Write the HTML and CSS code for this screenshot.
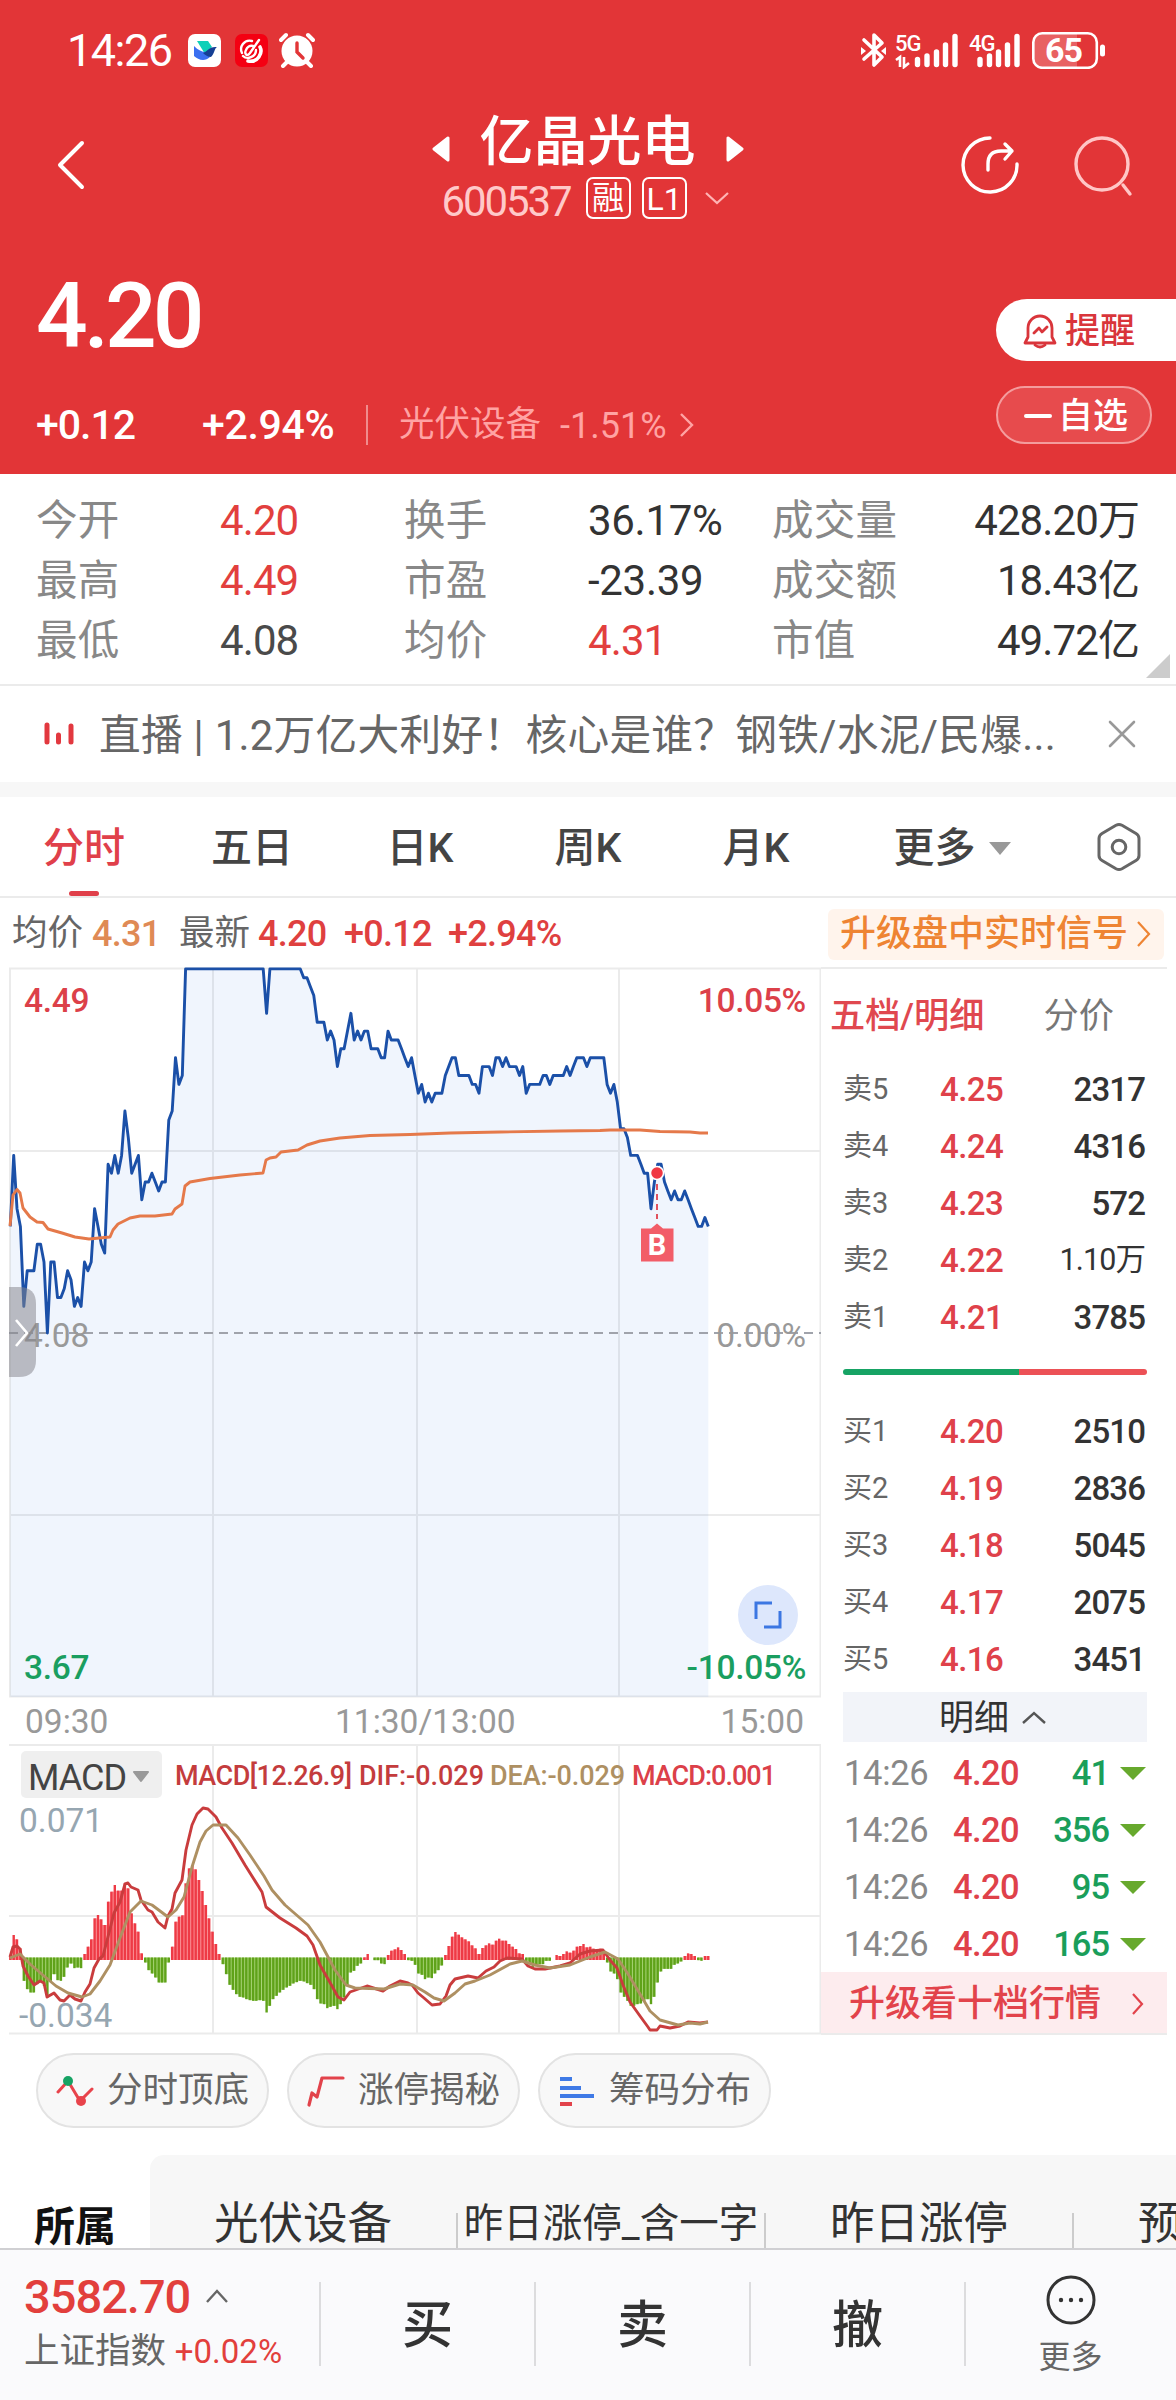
FILE: index.html
```html
<!DOCTYPE html>
<html lang="zh-CN">
<head>
    <meta charset="UTF-8">
    <meta name="viewport" content="width=device-width, initial-scale=1.0">
    <title>亿晶光电 600537</title>
    <link rel="stylesheet" href="styles.css">
</head>
<body>
    <header class="header">
        <div class="status-bar">
            <span class="clock">14:26</span>
            <svg class="app-icon" width="33" height="33" viewBox="0 0 33 33">
                <rect width="33" height="33" rx="7" fill="#fff"/>
                <path d="M9 7h11l4 6-7 7z" fill="#0fd0b8"/>
                <path d="M6 12c4 4 8 6 12 6l4 5c-5 5-12 3-16-1z" fill="#3a6ff0"/>
                <path d="M15 19c4-1 6-7 14-6-3 2-2 6-6 10-3 0-6-2-8-4z" fill="#153f94"/>
            </svg>
            <svg class="app-icon" width="33" height="33" viewBox="0 0 33 33">
                <rect width="33" height="33" rx="7" fill="#f40012"/>
                <g fill="none" stroke="#fff" stroke-width="2.4" stroke-linecap="round">
                    <path d="M17 7C9 5 4 13 7 19"/>
                    <path d="M24 6L15 19c-3 4-6 1-4-3 1-3 4-5 7-4"/>
                    <path d="M8 22c4 4 13 1 13-6"/>
                    <path d="M13 27c10 2 15-8 12-14" stroke-width="3.6"/>
                </g>
            </svg>
            <svg width="36" height="36" viewBox="0 0 36 36">
                <circle cx="18" cy="19" r="15.5" fill="#fff"/>
                <path d="M2 8l5-5M34 8l-5-5" stroke="#fff" stroke-width="4" stroke-linecap="round"/>
                <path d="M8 30l-4 4M28 30l4 4" stroke="#fff" stroke-width="4" stroke-linecap="round"/>
                <path d="M18 11v9l6 6" fill="none" stroke="#e23537" stroke-width="3.4" stroke-linecap="round"/>
            </svg>
            <span class="grow"></span>
            <svg width="245" height="38" viewBox="860 30 245 38" class="signals">
                <path d="M864 39l18 17-8 8V34l8 8-18 16" fill="none" stroke="#fff" stroke-width="3.6" stroke-linejoin="round" stroke-linecap="round"/>
                <path d="M861 46l5 4-5 4zM886 46l-5 4 5 4z" fill="#fff"/>
                <text x="895" y="49.500" class="net">5G</text>
                <text x="969" y="49.500" class="net">4G</text>
                <path d="M896 59l4-3v10M904 56v10l5-4" fill="none" stroke="#fff" stroke-width="2.6"/>
                <g stroke="#fff" stroke-width="5.4" stroke-linecap="round">
                    <path d="M917.500 58.500V63.500M927 55V63.500M936.500 51V63.500M945.500 44V63.500M955 35.500V63.500"/>
                    <path d="M980 58.500V63.500M989.500 55V63.500M998.500 51V63.500M1007.500 44V63.500M1017 35.500V63.500"/>
                </g>
                <path d="M1043 33h34v33h-34q-9 0-9-9v-15q0-9 9-9z" fill="#fff" opacity=".22"/>
                <rect x="1033.300" y="32.300" width="63.500" height="34.500" rx="9" fill="none" stroke="#fff" stroke-width="2.600"/>
                <rect x="1100" y="43.500" width="5" height="12" rx="2.500" fill="#fff"/>
                <text x="1063.500" y="61" class="battery" text-anchor="middle">65</text>
            </svg>
        </div>

        <div class="nav">
            <svg class="back" width="30" height="50" viewBox="0 0 30 50">
                <path d="M26 3L4 25l22 22" fill="none" stroke="#fff" stroke-width="4" stroke-linecap="round" stroke-linejoin="round"/>
            </svg>
            <div class="stock">
                <div class="stock-name">
                    <svg width="18" height="26" viewBox="0 0 18 26"><path d="M16 2v22L2 13z" fill="#fff" stroke="#fff" stroke-width="3" stroke-linejoin="round"/></svg>
                    <h1>亿晶光电</h1>
                    <svg width="18" height="26" viewBox="0 0 18 26"><path d="M2 2v22l14-11z" fill="#fff" stroke="#fff" stroke-width="3" stroke-linejoin="round"/></svg>
                </div>
                <div class="stock-code">
                    <span class="code">600537</span>
                    <span class="box">融</span>
                    <span class="box level">L1</span>
                    <svg width="26" height="14" viewBox="0 0 26 14"><path d="M2 2l11 10L24 2" fill="none" stroke="#ffb4b4" stroke-width="2.200"/></svg>
                </div>
            </div>
            <div class="nav-icons">
                <svg width="60" height="60" viewBox="0 0 60 60" fill="none" stroke="#fff" stroke-width="3.400" stroke-linecap="round" stroke-linejoin="round">
                    <path d="M31 3A27 27 0 1 0 58 29"/>
                    <path d="M29 35v-6q0-13 13-13h11M46 9l7 7-7 8"/>
                </svg>
                <svg width="60" height="62" viewBox="0 0 60 62" fill="none" stroke="#ffc6c6" stroke-width="3.400" stroke-linecap="round">
                    <circle cx="28" cy="29" r="26"/>
                    <path d="M49 50l7 9"/>
                </svg>
            </div>
        </div>

        <div class="quote">
            <div class="quote-left">
                <div class="price">4.20</div>
                <div class="change">
                    <span class="diff">+0.12</span>
                    <span class="percent">+2.94%</span>
                    <span class="sector">光伏设备</span>
                    <span class="sector-percent">-1.51%</span>
                    <svg width="16" height="26" viewBox="0 0 16 26"><path d="M2 2l11 11L2 24" fill="none" stroke="#ffa3a3" stroke-width="2.400"/></svg>
                </div>
            </div>
            <div class="quote-right">
                <button class="remind">
                    <svg width="34" height="36" viewBox="0 0 34 36" fill="none" stroke="#d9353b" stroke-width="2.800" stroke-linejoin="round" stroke-linecap="round">
                        <path d="M5 24V15a12 12 0 0 1 24 0v9l3 6H2z"/>
                        <path d="M11 20l5-5 3 4 5-5M12 32q5 4 10 0"/>
                    </svg>
                    提醒
                </button>
                <button class="favor"><i></i>自选</button>
            </div>
        </div>
    </header>

    <section class="stats">
        <span class="label">今开</span><span class="up">4.20</span>
        <span class="label">换手</span><span>36.17%</span>
        <span class="label">成交量</span><span class="right">428.20万</span>
        <span class="label">最高</span><span class="up">4.49</span>
        <span class="label">市盈</span><span>-23.39</span>
        <span class="label">成交额</span><span class="right">18.43亿</span>
        <span class="label">最低</span><span class="low">4.08</span>
        <span class="label">均价</span><span class="up">4.31</span>
        <span class="label">市值</span><span class="right">49.72亿</span>
        <i class="corner"></i>
    </section>

    <section class="news">
        <svg width="30" height="26" viewBox="0 0 30 26" stroke="#e2383f" stroke-width="5" stroke-linecap="round"><path d="M3 4v17M14.500 14v7M27 5v16"/></svg>
        <p>直播 | 1.2万亿大利好！核心是谁？钢铁/水泥/民爆...</p>
        <svg width="28" height="28" viewBox="0 0 28 28"><path d="M2 2l24 24M26 2L2 26" stroke="#999" stroke-width="2.600" stroke-linecap="round"/></svg>
    </section>

    <nav class="tabs">
        <a class="active">分时</a>
        <a>五日</a>
        <a>日K</a>
        <a>周K</a>
        <a>月K</a>
        <a>更多<i class="caret"></i></a>
        <a class="setting">
            <svg width="44" height="50" viewBox="0 0 44 50" fill="none" stroke="#666" stroke-width="3" stroke-linejoin="round">
                <path d="M19 3.300q3-1.600 6 0l14 8.200q3 1.800 3 5v17q0 3.200-3 5l-14 8.200q-3 1.600-6 0l-14-8.200q-3-1.800-3-5v-17q0-3.200 3-5z"/>
                <circle cx="22" cy="25" r="6.800"/>
            </svg>
        </a>
    </nav>

    <div class="info-row">
        <span class="name">均价</span><span class="num avg">4.31</span>
        <span class="name latest">最新</span><span class="num">4.20</span>
        <span class="num diff2">+0.12</span><span class="num pct2">+2.94%</span>
        <a class="signal-btn">升级盘中实时信号
            <svg width="15" height="28" viewBox="0 0 15 28"><path d="M2 2l11 12L2 26" fill="none" stroke="#ee8433" stroke-width="2.200"/></svg>
        </a>
    </div>

    <main class="board">
        <svg class="chart" width="821" height="1070" viewBox="0 967 821 1070">
            <g class="grid">
                <path d="M9 968.500H821M9 1151H821M9 1515H821M9 1696.500H821"/>
                <path d="M10 968V1697M213 968V1697M417 968V1697M619 968V1697M820.500 968V1697"/>
                <path d="M9 1745H821M9 1916H821M9 2033.500H821"/>
                <path d="M213 1745V2034M417 1745V2034M619 1745V2034M820.500 1745V2034"/>
            </g>
            <path id="area" class="area"/>
            <path class="zero" d="M9 1333H822"/>
            <path id="line" class="line"/>
            <polyline class="avg-line" points="10,1226 13,1195 17,1189.500 20,1193 23,1208 30,1217 37,1222 43,1222.500 48,1229 62,1233 75,1237 89,1239 110,1237 113,1230 118,1224 130,1218 140,1216 155,1216 172,1214 175,1209 182,1204 185,1186 190,1182 210,1178.500 240,1175 263,1173 266,1160 270,1158 276,1157 281,1152 298,1150 307,1145 320,1141 340,1138 370,1135.500 410,1134.500 450,1133 500,1132 560,1131 600,1130.500 610,1130 640,1130 660,1131.500 690,1132 700,1133 708,1133"/>

            <text class="axis red" x="24" y="1012">4.49</text>
            <text class="axis red end" x="806" y="1012">10.05%</text>
            <text class="axis gray" x="24" y="1347">4.08</text>
            <text class="axis gray end" x="806" y="1347">0.00%</text>
            <text class="axis green" x="24" y="1679">3.67</text>
            <text class="axis green end" x="806" y="1679">-10.05%</text>
            <text class="axis gray" x="25" y="1733">09:30</text>
            <text class="axis gray" x="335" y="1733">11:30/13:00</text>
            <text class="axis gray end" x="804" y="1733">15:00</text>

            <!-- buy marker -->
            <path d="M657 1184V1219" stroke="#e0525e" stroke-width="2" stroke-dasharray="6 4"/>
            <circle cx="657" cy="1173" r="6.500" fill="#f03742" stroke="#fff" stroke-width="1.500"/>
            <path d="M641 1228.500h10l6-5 6 5h10.500v33H641z" fill="#f25d68"/>
            <text class="buy" x="657" y="1255" text-anchor="middle">B</text>

            <!-- drawer handle -->
            <path d="M9 1287h10q17 0 17 17v56q0 17-17 17H9z" fill="#84858c" opacity=".52"/>
            <path d="M16 1320l11 13-11 13" fill="none" stroke="#fff" stroke-width="2.600"/>

            <circle cx="768" cy="1615" r="30" fill="#dde7fc"/>
            <path d="M756 1619v-16h16M764 1627h16v-16" fill="none" stroke="#3c77e2" stroke-width="3"/>

            <g id="bars"></g>
            <polyline class="dif" points="10,1957 13,1947 17,1946 20,1949 23,1966 28,1976 34,1985 40,1981 44,1983 47,1997 54,1993 60,2000 64,2001 70,1995 75,1999 81,2001 85,1992 90,1984 94,1968 99,1959 103,1956 110,1929 114,1913 120,1902 125,1884 128,1883 131,1887 138,1890 141,1900 148,1910 152,1912 158,1922 165,1928 168,1916 172,1909 175,1893 182,1880 186,1850 192,1825 197,1814 203,1808 208,1809 216,1817 222,1828 232,1843 245,1865 262,1892 266,1907 280,1918 296,1928 307,1936 313,1945 320,1965 332,1986 338,1997 344,2000 350,1992 367,1986 383,1991 390,1986 400,1981 408,1983 412,1985 418,1993 424,1998 432,2005 440,2004 446,1996 450,1985 455,1979 468,1976 478,1978 486,1971 494,1967 500,1961 507,1958 522,1959 528,1966 535,1969 545,1969 560,1966 570,1963 580,1954 590,1951 603,1950 610,1960 617,1968 623,1985 630,2002 640,2016 648,2027 650,2030 657,2030 660,2026 670,2028 680,2026 688,2022 700,2023 708,2022"/>
            <polyline class="dea" points="10,1958 20,1954 30,1964 44,1976 56,1986 68,1993 82,1997 90,1994 100,1981 110,1965 120,1938 130,1912 141,1901 152,1905 168,1917 176,1910 184,1897 192,1867 200,1842 206,1831 213,1825 226,1825 238,1838 250,1855 264,1876 272,1890 285,1905 308,1925 320,1942 335,1970 346,1985 355,1988 384,1989 400,1984 413,1985 425,1992 434,1998 444,2001 455,1993 465,1984 475,1981 490,1975 510,1964 522,1961 535,1965 550,1968 570,1965 590,1957 605,1952 618,1959 628,1974 640,1994 650,2011 660,2020 678,2025 690,2023 700,2024 708,2022"/>

            <rect x="21" y="1751" width="141" height="47" rx="5" fill="#efefef"/>
            <text class="macd-name" x="28" y="1790">MACD</text>
            <path d="M134 1772h14l-7 9z" fill="#999" stroke="#999" stroke-width="2" stroke-linejoin="round"/>
            <text class="legend dark" x="175" y="1785" textLength="177">MACD[12.26.9]</text>
            <text class="legend dark" x="359" y="1785" textLength="125">DIF:-0.029</text>
            <text class="legend gold" x="490" y="1785" textLength="135">DEA:-0.029</text>
            <text class="legend red" x="632" y="1785" textLength="144">MACD:0.001</text>
            <text class="axis steel" x="19" y="1832">0.071</text>
            <text class="axis steel" x="19" y="2027">-0.034</text>
        </svg>

        <aside class="orders">
            <div class="order-tabs"><b>五档/明细</b><span>分价</span></div>
            <div class="row"><span>卖5</span><b>4.25</b><em>2317</em></div>
            <div class="row"><span>卖4</span><b>4.24</b><em>4316</em></div>
            <div class="row"><span>卖3</span><b>4.23</b><em>572</em></div>
            <div class="row"><span>卖2</span><b>4.22</b><em class="wan">1.10万</em></div>
            <div class="row"><span>卖1</span><b>4.21</b><em>3785</em></div>
            <div class="ratio"><i></i></div>
            <div class="row"><span>买1</span><b>4.20</b><em>2510</em></div>
            <div class="row"><span>买2</span><b>4.19</b><em>2836</em></div>
            <div class="row"><span>买3</span><b>4.18</b><em>5045</em></div>
            <div class="row"><span>买4</span><b>4.17</b><em>2075</em></div>
            <div class="row"><span>买5</span><b>4.16</b><em>3451</em></div>
            <div class="detail-title">明细
                <svg width="26" height="14" viewBox="0 0 26 14"><path d="M2 12L13 2l11 10" fill="none" stroke="#555" stroke-width="2.400"/></svg>
            </div>
            <div class="tick"><span>14:26</span><b>4.20</b><em>41</em><i></i></div>
            <div class="tick"><span>14:26</span><b>4.20</b><em>356</em><i></i></div>
            <div class="tick"><span>14:26</span><b>4.20</b><em>95</em><i></i></div>
            <div class="tick"><span>14:26</span><b>4.20</b><em>165</em><i></i></div>
            <a class="upgrade">升级看十档行情
                <svg width="14" height="24" viewBox="0 0 14 24"><path d="M2 2l9 10-9 10" fill="none" stroke="#e2434b" stroke-width="2.200"/></svg>
            </a>
        </aside>
    </main>

    <div class="chips">
        <a class="chip">
            <svg width="38" height="32" viewBox="0 0 38 32">
                <path d="M2 17L12 6l12 20L36 14" fill="none" stroke="#e8434b" stroke-width="3" stroke-linecap="round"/>
                <circle cx="12" cy="6" r="5" fill="#16a364"/><circle cx="25" cy="26" r="5" fill="#e8434b"/>
            </svg>分时顶底
        </a>
        <a class="chip">
            <svg width="38" height="32" viewBox="0 0 38 32"><path d="M2 30l3-12 5 4 5-19h21" fill="none" stroke="#e2434b" stroke-width="3.200" stroke-linejoin="round" stroke-linecap="round"/></svg>涨停揭秘
        </a>
        <a class="chip">
            <svg width="38" height="32" viewBox="0 0 38 32" stroke-width="4"><path d="M2 4h12M2 13h21M2 21h34" stroke="#3f7ae6"/><path d="M2 29h12" stroke="#e2434b"/></svg>筹码分布
        </a>
    </div>

    <div class="belong">
        <b>所属</b>
        <div class="belong-list">
            <span>光伏设备</span>
            <span class="small">昨日涨停_含一字</span>
            <span>昨日涨停</span>
            <span class="last">预</span>
        </div>
    </div>

    <footer class="footer">
        <div class="index">
            <div class="index-value">3582.70
                <svg width="24" height="15" viewBox="0 0 24 15"><path d="M2 13L12 2l10 11" fill="none" stroke="#666" stroke-width="2.400"/></svg>
            </div>
            <div class="index-name">上证指数 <span>+0.02%</span></div>
        </div>
        <a>买</a>
        <a>卖</a>
        <a>撤</a>
        <a class="more">
            <svg width="50" height="50" viewBox="0 0 50 50">
                <circle cx="25" cy="25" r="23" fill="none" stroke="#333" stroke-width="3"/>
                <circle cx="15" cy="25" r="2.200" fill="#333"/><circle cx="25" cy="25" r="2.200" fill="#333"/><circle cx="35" cy="25" r="2.200" fill="#333"/>
            </svg>更多
        </a>
    </footer>

    <script src="chart.js"></script>
</body>
</html>
```
FILE: styles.css
```css
* {
    box-sizing: border-box;
}
body {
    margin: 0;
    width: 1176px;
    height: 2400px;
    overflow: hidden;
    background: #fff;
    color: #333;
    font-family: Roboto, "Noto Sans CJK SC", sans-serif;
    line-height: 1;
}
svg {
    display: block;
    flex: none;
}
h1, p {
    margin: 0;
}
i, em {
    font-style: normal;
}
.grow {
    flex: 1;
}

/* header */
.header {
    height: 474px;
    background: #e23537;
    color: #fff;
}
.status-bar {
    display: flex;
    align-items: center;
    height: 100px;
    padding: 0 71px 0 67px;
}
.clock {
    width: 121px;
    font-size: 45px;
    letter-spacing: -1.5px;
}
.app-icon {
    margin-right: 14px;
}
.status-bar .app-icon + svg:not(.app-icon) {
    margin-left: -3px;
}
.net {
    font-size: 22px;
    font-weight: 500;
    fill: #fff;
    letter-spacing: -1px;
}
.battery {
    font-size: 34px;
    font-weight: 700;
    fill: #fff;
    letter-spacing: -1px;
}
.nav {
    display: flex;
    justify-content: space-between;
    height: 130px;
    padding: 10px 42px 0 56px;
}
.back {
    margin-top: 30px;
}
.stock {
    width: 312px;
    margin-left: 130px;
}
.stock-name {
    display: flex;
    align-items: center;
    justify-content: space-between;
    height: 60px;
}
.stock-name svg {
    margin-top: 17px;
}
.stock-name h1 {
    padding-top: 5px;
    font-size: 54px;
    font-weight: 500;
}
.stock-code {
    display: flex;
    align-items: center;
    height: 56px;
    padding-left: 10px;
}
.code {
    width: 144px;
    color: #ffc9c9;
    font-size: 42px;
    letter-spacing: -2.1px;
    padding-top: 7px;
}
.box {
    width: 45px;
    height: 42px;
    margin-right: 11px;
    border: 2px solid #fff;
    border-radius: 7px;
    font-size: 32px;
    line-height: 38px;
    text-align: center;
    flex: none;
}
.level {
    line-height: 40px;
}
.stock-code svg {
    margin-left: 6px;
}
.nav-icons {
    display: flex;
    gap: 55px;
    padding-top: 25px;
}
.quote {
    display: flex;
    justify-content: space-between;
}
.quote-left {
    padding-left: 36px;
}
.price {
    margin-top: 37px;
    height: 128px;
    font-size: 91px;
    font-weight: 500;
    line-height: 98px;
    letter-spacing: -4px;
}
.change {
    display: flex;
    align-items: center;
    height: 60px;
    font-size: 41px;
}
.change span {
    flex: none;
}
.diff {
    width: 166px;
    font-weight: 500;
    letter-spacing: -1px;
}
.percent {
    width: 164px;
    font-weight: 500;
    letter-spacing: -.3px;
}
.sector {
    height: 40px;
    padding-left: 31px;
    border-left: 2px solid #f08c8d;
    color: #ffa3a3;
    font-size: 35.5px;
    line-height: 38px;
}
.sector-percent {
    margin: 2px 12px 0 19px;
    color: #ffa3a3;
    font-size: 36px;
    letter-spacing: 0;
}
.quote-right {
    width: 180px;
    padding-top: 69px;
}
.quote-right button {
    display: flex;
    align-items: center;
    font-family: inherit;
    font-size: 35px;
    font-weight: 500;
    line-height: 1;
}
.remind {
    width: 180px;
    height: 62px;
    padding: 2px 0 0 27px;
    gap: 8px;
    border: 0;
    border-radius: 31px 0 0 31px;
    background: #fff;
    color: #d9353b;
}
.favor {
    width: 156px;
    height: 58px;
    margin-top: 25px;
    padding: 2px 0 0 26px;
    gap: 6px;
    border: 2px solid #f49c9d;
    border-radius: 29px;
    background: #e74b4d;
    color: #fff;
}
.favor i {
    width: 28px;
    height: 4px;
    border-radius: 2px;
    background: #fff;
}

/* today's numbers */
.stats {
    position: relative;
    display: grid;
    grid-template-columns: 184px 184px 184px 184px 150px 1fr;
    grid-auto-rows: 60px;
    align-items: center;
    height: 212px;
    padding: 17px 37px 0 36px;
    border-bottom: 2px solid #ebebeb;
    font-size: 42px;
    letter-spacing: -.3px;
}
.stats .label {
    color: #888;
    letter-spacing: .3px;
    font-size: 41.5px;
    white-space: nowrap;
}
.stats .low {
    color: #4a4a4a;
    letter-spacing: -.9px;
}
.stats .right {
    text-align: right;
    letter-spacing: -.9px;
    white-space: nowrap;
}
.stats .up {
    color: #e23f3e;
    letter-spacing: -.9px;
}
.corner {
    position: absolute;
    right: 6px;
    bottom: 6px;
    border-left: 24px solid transparent;
    border-bottom: 24px solid #ccc;
}
.news {
    display: flex;
    align-items: center;
    height: 111px;
    padding: 0 40px 0 44px;
    border-bottom: 15px solid #f7f7f7;
}
.news p {
    width: 1010px;
    padding: 3px 0 0 25px;
    margin-right: 26px;
    color: #666;
    font-size: 41.7px;
    letter-spacing: .3px;
    white-space: nowrap;
}

/* period tabs */
.tabs {
    display: grid;
    grid-template-columns: repeat(5, 168px) 224px 112px;
    height: 101px;
    border-bottom: 2px solid #ebebeb;
}
.tabs a {
    display: flex;
    align-items: center;
    justify-content: center;
    padding-top: 4px;
    color: #444;
    font-size: 41px;
    font-weight: 500;
}
.tabs .setting {
    padding: 0 2px 0 0;
}
.tabs .active {
    position: relative;
    color: #e0404a;
}
.tabs .active::after {
    content: "";
    position: absolute;
    left: 69px;
    bottom: 0;
    width: 30px;
    height: 5px;
    border-radius: 3px;
    background: #e0404a;
}
.caret {
    margin-left: 13px;
    border: 11px solid transparent;
    border-top: 13px solid #999;
    border-bottom: 0;
}
.info-row {
    display: flex;
    align-items: center;
    height: 69px;
    padding: 3px 12px 0 12px;
}
.name {
    width: 80px;
    color: #666;
    font-size: 35.5px;
}
.num {
    width: 86px;
    color: #df403f;
    font-size: 36px;
    font-weight: 500;
    letter-spacing: -.7px;
    white-space: nowrap;
}
.avg {
    color: #df8a55;
}
.diff2 {
    width: 104px;
}
.latest {
    padding-left: 1px;
}
.signal-btn {
    display: flex;
    align-items: center;
    justify-content: space-between;
    width: 336px;
    height: 51px;
    margin-left: auto;
    padding: 0 13px 0 12px;
    border-radius: 6px;
    background: #fff4ec;
    color: #ee8433;
    font-size: 36px;
    font-weight: 500;
    white-space: nowrap;
}

/* chart */
.board {
    display: flex;
    height: 1070px;
}
.grid path {
    stroke: #ebebeb;
    stroke-width: 2;
    fill: none;
}
.area {
    fill: #3b7bea;
    fill-opacity: .08;
}
.zero {
    stroke: #a0a3ab;
    stroke-width: 2;
    stroke-dasharray: 9 6;
}
.line, .avg-line, .dif, .dea {
    fill: none;
    stroke-width: 2.9;
    stroke-linejoin: round;
}
.line {
    stroke: #1b50a8;
}
.avg-line {
    stroke: #e5794a;
}
.dif {
    stroke: #c93c3d;
}
.dea {
    stroke: #ae9062;
}
.axis {
    font-size: 33.5px;
}
.axis.red, .axis.green {
    font-weight: 500;
    letter-spacing: -.3px;
}
.end {
    text-anchor: end;
}
.red {
    fill: #dc4049;
}
.gray {
    fill: #999;
}
.green {
    fill: #1a9e60;
}
.steel {
    fill: #96a6b1;
}
.buy {
    font-size: 29px;
    font-weight: 700;
    fill: #fff;
}
.macd-name {
    font-size: 36px;
    letter-spacing: -1px;
    fill: #444;
}
.legend {
    font-size: 27px;
    font-weight: 500;
}
.dark {
    fill: #c43c3d;
}
.gold {
    fill: #ae9062;
}

/* order book */
.orders {
    width: 346px;
    height: 1068px;
    border-top: 2px solid #ebebeb;
    border-bottom: 2px solid #ebebeb;
}
.order-tabs {
    display: flex;
    gap: 59px;
    height: 92px;
    padding: 30px 0 0 9px;
    font-size: 35.2px;
    color: #777;
}
.order-tabs b {
    color: #e0484f;
    font-weight: 500;
}
.row {
    display: grid;
    grid-template-columns: 97px 80px 1fr;
    align-items: center;
    height: 57px;
    padding: 0 22px 0 22px;
    font-size: 33px;
}
.row span {
    font-size: 29px;
    color: #666;
}
.row b, .tick b {
    color: #df414a;
    font-weight: 500;
    letter-spacing: -.6px;
}
.row em {
    font-weight: 500;
    text-align: right;
    letter-spacing: -.9px;
    color: #333;
}
.row .wan {
    font-size: 30.5px;
    font-weight: 400;
    white-space: nowrap;
}
.ratio {
    height: 57px;
    padding: 23px 20px 0 22px;
}
.ratio i {
    display: block;
    height: 6px;
    border-radius: 3px;
    background: linear-gradient(90deg, #16a364 58%, #ec5156 58%);
}
.detail-title {
    display: flex;
    align-items: center;
    justify-content: center;
    gap: 12px;
    height: 50px;
    margin: 4px 20px 2px 22px;
    padding: 2px 4px 0 0;
    background: #f2f4f9;
    font-size: 35px;
}
.tick {
    display: grid;
    grid-template-columns: 109px 67px 1fr 37px;
    align-items: center;
    height: 57px;
    padding: 2px 21px 0 23px;
    font-size: 34.5px;
}
.tick span {
    color: #888;
    letter-spacing: -.3px;
}
.tick em {
    color: #1a9e5a;
    font-weight: 500;
    text-align: right;
    letter-spacing: -1px;
}
.tick i {
    justify-self: end;
    border: 13px solid transparent;
    border-top: 13px solid #67a92d;
    border-bottom: 0;
}
.upgrade {
    display: flex;
    align-items: center;
    justify-content: space-between;
    height: 61px;
    padding: 2px 22px 0 28px;
    background: #fdecee;
    color: #e2434b;
    font-size: 36px;
    font-weight: 500;
}

/* chips under the chart */
.chips {
    display: flex;
    gap: 18px;
    padding: 16px 36px 0;
}
.chip {
    display: flex;
    align-items: center;
    width: 233px;
    height: 75px;
    padding: 0 0 0 18px;
    gap: 13px;
    border: 2px solid #e3e3e3;
    border-radius: 38px;
    background: #f8f8f8;
    color: #666;
    font-size: 35.5px;
    white-space: nowrap;
}
.belong {
    display: flex;
    height: 93px;
    margin-top: 27px;
    overflow: hidden;
}
.belong b {
    width: 150px;
    padding: 52px 0 0 34px;
    color: #111;
    font-size: 41px;
    flex: none;
}
.belong-list {
    display: flex;
    flex: none;
    border-radius: 14px 0 0 0;
    background: #f7f7f7;
    padding-top: 58px;
}
.belong-list span {
    width: 308px;
    height: 50px;
    border-right: 2px solid #ccc;
    font-size: 44.5px;
    line-height: 22px;
    text-align: center;
    white-space: nowrap;
}
.belong-list .small {
    font-size: 39.5px;
}
.belong-list .last {
    padding-left: 64px;
    text-align: left;
}

/* bottom bar */
.footer {
    display: flex;
    height: 153px;
    padding-top: 32px;
    border-top: 2px solid #d0d0d3;
    background: #fafafc;
}
.index {
    width: 319px;
    padding-left: 24px;
}
.index-value {
    display: flex;
    align-items: center;
    gap: 15px;
    height: 28px;
    color: #e23f3c;
    font-size: 47px;
    font-weight: 500;
    letter-spacing: -1px;
}
.index-name {
    margin-top: 24px;
    color: #666;
    font-size: 35.5px;
    white-space: nowrap;
}
.index-name span {
    color: #e23f3c;
    font-size: 33px;
}
.footer a {
    width: 215px;
    height: 84px;
    border-left: 2px solid #dcdcde;
    font-size: 51px;
    font-weight: 500;
    line-height: 88px;
    text-align: center;
}
.footer .more {
    display: flex;
    flex-direction: column;
    align-items: center;
    width: 211px;
    color: #666;
    font-size: 32px;
    font-weight: 400;
    line-height: 64px;
}
.more svg {
    margin-top: -7px;
}
```
FILE: chart.js
```js
const STEP = 3.372;
const X0 = 10.3;

// [minute, cents above 4.08]
const price = [
    [0,12],[1,20],[2,14],[3,12],[4,3],[5,7],[7,7],[8,10],[9,10],[10,8],[11,0],[12,8],[13,8],[14,4],[15,4],[16,5],[17,7],[18,6],[19,3],[20,4],
    [21,3],[22,8],[23,7],[24,8],[25,14],[26,12],[27,10],[28,9],[29,19],[30,18],[31,20],[32,18],[33,20],[34,25],[35,22],[36,18],[37,19],[38,20],
    [39,15],[40,17],[41,17],[42,18],[43,17],[44,16],[45,17],[46,17],[47,24],[48,25],[49,31],[50,28],[51,29],[52,41],[75,41],[76,36],[77,41],
    [86,41],[87,40],[88,40],[89,39],[90,38],[91,35],[93,35],[94,33],[95,34],[96,33],[97,30],[98,32],[99,32],[100,34],[101,36],[102,33],[103,34],
    [104,33],[105,34],[106,34],[107,32],[109,32],[110,31],[111,31],[112,34],[113,33],[115,33],[116,32],[117,31],[118,30],[119,31],[120,29],
    [121,27],[122,28],[123,26],[124,27],[125,26],[126,27],[128,27],[129,29],[131,31],[132,31],[133,29],[136,29],[137,28],[138,28],[139,27],
    [140,30],[142,30],[143,29],[144,31],[145,31],[146,30],[147,31],[148,30],[150,30],[151,29],[152,30],[153,27],[154,28],[157,28],[158,29],
    [159,29],[160,28],[161,29],[164,29],[165,30],[166,29],[167,30],[168,31],[170,31],[171,30],[172,31],[176,31],[177,28],[178,27],[179,28],
    [180,26],[181,23],[182,23],[183,22],[184,20],[186,20],[187,19],[188,18],[189,18],[190,14],[191,17],[192,19],[193,19],[194,17],[195,16],
    [196,15],[197,16],[198,15],[199,15],[200,16],[201,15],[202,14],[203,13],[204,12],[205,12],[206,13],[207,12]
];

// MACD bar heights, one per minute
const macd = [
    15,75,62,35,-70,-95,-105,-105,-80,-72,-85,-120,-70,-50,-68,-70,-58,-30,-18,-32,-30,-32,18,40,62,125,135,122,105,175,205,225,208,208,230,
    215,140,110,85,20,-15,-38,-48,-60,-75,-75,-75,-15,40,115,130,134,230,275,285,272,240,207,165,125,85,48,18,-20,-50,-82,-97,-110,-118,-120,
    -125,-128,-130,-130,-128,-130,-165,-145,-125,-115,-105,-97,-90,-85,-78,-74,-70,-72,-77,-82,-95,-125,-138,-140,-152,-148,-145,-155,-140,
    -120,-85,-45,-40,-25,-18,8,18,0,-8,-8,-18,-20,15,28,32,38,30,18,-8,-10,-22,-48,-52,-65,-60,-62,-48,-38,-24,15,42,70,84,76,68,62,56,44,35,
    18,36,44,50,46,58,64,58,58,48,40,33,20,18,-10,-18,-28,-26,-20,-20,-10,-10,0,15,12,18,26,22,28,40,42,48,38,40,34,30,34,28,-15,-42,-48,-65,
    -105,-118,-130,-145,-145,-140,-138,-130,-125,-140,-118,-75,-42,-34,-34,-34,-22,-18,-12,12,20,18,12,-8,-10,12,12
];

const x = m => (X0 + m * STEP).toFixed(1);
const path = price.map(([m, c]) => `${x(m)} ${(1333 - c * 8.88).toFixed(1)}`).join('L');
document.getElementById('line').setAttribute('d', 'M' + path);
document.getElementById('area').setAttribute('d', `M${x(0)} 1697L${path}L${x(207)} 1697Z`);

let bars = '';
macd.forEach((v, m) => {
    if (!v) return;
    const h = Math.abs(v) / 3;
    const y = v > 0 ? 1960 - h : 1957.5;
    const next = macd[m + 1] || 0;
    // lighter strip up to the next bar of the same colour
    if (v * next > 0) {
        const g = Math.min(h, Math.abs(next) / 3);
        bars += `<rect x="${x(m)}" y="${v > 0 ? 1960 - g : 1957.5}" width="${STEP}" height="${g}" fill="${v > 0 ? '#fb9398' : '#a9d478'}"/>`;
    }
    bars += `<rect x="${x(m - .36)}" y="${y}" width="2.400" height="${h}" fill="${v > 0 ? '#ee3a45' : '#5fa219'}"/>`;
});
document.getElementById('bars').innerHTML = bars;
```
